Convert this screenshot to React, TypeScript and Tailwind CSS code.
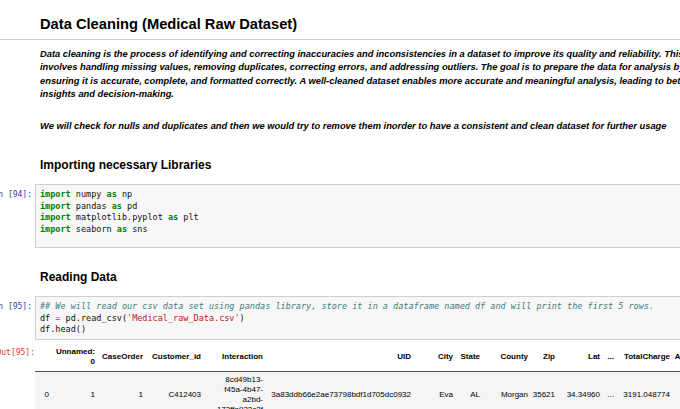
import React from "react";

type Tok = { t: string; c?: string };

const KW = "text-[#008000] font-bold";
const OP = "text-[#aa22ff]";
const STR = "text-[#ba2121]";
const CMT = "text-[#408080] italic";

const importLines: Tok[][] = [
  [{ t: "import", c: KW }, { t: " numpy " }, { t: "as", c: KW }, { t: " np" }],
  [{ t: "import", c: KW }, { t: " pandas " }, { t: "as", c: KW }, { t: " pd" }],
  [
    { t: "import", c: KW },
    { t: " matplotlib.pyplot " },
    { t: "as", c: KW },
    { t: " plt" },
  ],
  [{ t: "import", c: KW }, { t: " seaborn " }, { t: "as", c: KW }, { t: " sns" }],
];

const readLines: Tok[][] = [
  [
    {
      t: "## We will read our csv data set using pandas library, store it in a dataframe named df and will print the first 5 rows.",
      c: CMT,
    },
  ],
  [
    { t: "df " },
    { t: "=", c: OP },
    { t: " pd.read_csv(" },
    { t: "'Medical_raw_Data.csv'", c: STR },
    { t: ")" },
  ],
  [{ t: "df.head()" }],
];

const columns = [
  { w: "w-[14px]", h: "" },
  { w: "w-[46px]", h: "Unnamed:\n0" },
  { w: "w-[48px]", h: "CaseOrder" },
  { w: "w-[58px]", h: "Customer_id" },
  { w: "w-[62px]", h: "Interaction" },
  { w: "w-[148px]", h: "UID" },
  { w: "w-[42px]", h: "City" },
  { w: "w-[27px]", h: "State" },
  { w: "w-[48px]", h: "County" },
  { w: "w-[27px]", h: "Zip" },
  { w: "w-[45px]", h: "Lat" },
  { w: "w-[14px]", h: "..." },
  { w: "w-[56px]", h: "TotalCharge" },
  { w: "w-[79px]", h: "Additional_charges" },
];

const rows = [
  [
    "0",
    "1",
    "1",
    "C412403",
    "8cd49b13-\nf45a-4b47-\na2bd-\n173ffa932c2f",
    "3a83ddb66e2ae73798bdf1d705dc0932",
    "Eva",
    "AL",
    "Morgan",
    "35621",
    "34.34960",
    "...",
    "3191.048774",
    "17939.403420",
  ],
];

const Lines = ({ text }: { text: string }) => (
  <>
    {text.split("\n").map((line, i) => (
      <div key={i}>{line}</div>
    ))}
  </>
);

const Prompt = ({ text, className }: { text: string; className: string }) => (
  <div
    className={`w-[35px] shrink-0 flex justify-end whitespace-nowrap font-['DejaVu_Sans_Mono',monospace] text-[8px] leading-[11.5px] ${className}`}
  >
    {text}
  </div>
);

const CodeCell = ({
  n,
  lines,
  pad,
}: {
  n: number;
  lines: Tok[][];
  pad: string;
}) => (
  <div className="flex items-start">
    <Prompt text={`In [${n}]:`} className="text-[#303f9f] pt-[5px] pr-[3px]" />
    <div
      className={`flex-1 border border-[#cfcfcf] bg-[#f7f7f7] pl-[4px] pt-[4px] ${pad} font-['DejaVu_Sans_Mono',monospace] text-[8.5px] leading-[11.5px] text-[#111] whitespace-pre`}
    >
      {lines.map((line, i) => (
        <div key={i}>
          {line.map((tok, j) => (
            <span key={j} className={tok.c}>
              {tok.t}
            </span>
          ))}
        </div>
      ))}
    </div>
  </div>
);

export default function App() {
  return (
    <div className="w-[680px] h-[409px] overflow-hidden bg-white text-black font-['Liberation_Sans',Arial,sans-serif]">
      <div className="w-[760px]">
        <div className="border-b border-[#cfcfcf] pl-[40px] pt-[14px] pb-[5px]">
          <h2 className="text-[14.7px] font-bold leading-[20px]">
            Data Cleaning (Medical Raw Dataset)
          </h2>
        </div>

        <div className="mt-[8px] pl-[40px] text-[9.35px] leading-[13.4px] font-bold italic whitespace-nowrap">
          <p>
            Data cleaning is the process of identifying and correcting inaccuracies and
            inconsistencies in a dataset to improve its quality and reliability. This
            <br />
            involves handling missing values, removing duplicates, correcting errors, and
            addressing outliers. The goal is to prepare the data for analysis by
            <br />
            ensuring it is accurate, complete, and formatted correctly. A well-cleaned
            dataset enables more accurate and meaningful analysis, leading to better
            <br />
            insights and decision-making.
          </p>
          <p className="mt-[18.4px]">
            We will check for nulls and duplicates and then we would try to remove them
            inorder to have a consistent and clean dataset for further usage
          </p>
        </div>

        <h3 className="mt-[24px] pl-[40px] text-[12px] leading-[16px] font-bold">
          Importing necessary Libraries
        </h3>
        <div className="mt-[11px]">
          <CodeCell n={94} lines={importLines} pad="pb-[12px]" />
        </div>

        <h3 className="mt-[21px] pl-[40px] text-[12px] leading-[16px] font-bold">
          Reading Data
        </h3>
        <div className="mt-[11px]">
          <CodeCell n={95} lines={readLines} pad="pb-[3px]" />
        </div>

        <div className="mt-[3px] flex items-start">
          <Prompt text="Out[95]:" className="text-[#d84315] pt-[4px]" />
          <table className="table-fixed border-collapse w-[713px] text-[8px] leading-[10px]">
            <colgroup>
              {columns.map((col, i) => (
                <col key={i} className={col.w} />
              ))}
            </colgroup>
            <thead>
              <tr className="border-b border-[#555]">
                {columns.map((col, i) => (
                  <th
                    key={i}
                    className="px-0 py-[4px] text-right align-middle font-bold whitespace-nowrap"
                  >
                    <Lines text={col.h} />
                  </th>
                ))}
              </tr>
            </thead>
            <tbody>
              {rows.map((row, r) => (
                <tr key={r} className="bg-[#f5f5f5]">
                  {row.map((cell, i) => (
                    <td
                      key={i}
                      className="px-0 py-[3px] text-right align-middle whitespace-nowrap"
                    >
                      <Lines text={cell} />
                    </td>
                  ))}
                </tr>
              ))}
            </tbody>
          </table>
        </div>
      </div>
    </div>
  );
}
